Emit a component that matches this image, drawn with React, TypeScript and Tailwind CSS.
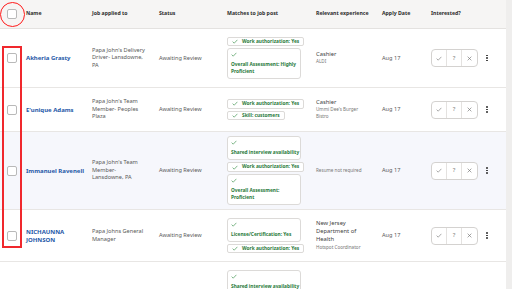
import React from "react";

type TagT = { lines: string[]; stacked?: boolean };
type Row = {
  name: string[];
  job: string[];
  tags: TagT[];
  exp: string[];
  expSub?: string;
  h: string;
  shaded?: boolean;
  actions?: boolean;
};

const rows: Row[] = [
  {
    name: ["Akheria Grasty"],
    job: ["Papa John's Delivery", "Driver- Lansdowne,", "PA"],
    tags: [
      { lines: ["Work authorization: Yes"] },
      { lines: ["Overall Assessment: Highly", "Proficient"], stacked: true },
    ],
    exp: ["Cashier"],
    expSub: "ALDI",
    h: "h-[59px]",
    actions: true,
  },
  {
    name: ["E'unique Adams"],
    job: ["Papa John's Team", "Member- Peoples", "Plaza"],
    tags: [{ lines: ["Work authorization: Yes"] }, { lines: ["Skill: customers"] }],
    exp: ["Cashier"],
    expSub: "Ummi Dee's Burger\nBistro",
    h: "h-[44px]",
    actions: true,
  },
  {
    name: ["Immanuel Ravenell"],
    job: ["Papa John's Team", "Member-", "Lansdowne, PA"],
    tags: [
      { lines: ["Shared interview availability"], stacked: true },
      { lines: ["Work authorization: Yes"] },
      { lines: ["Overall Assessment:", "Proficient"], stacked: true },
    ],
    exp: [],
    expSub: "Resume not required",
    h: "h-[78px]",
    shaded: true,
    actions: true,
  },
  {
    name: ["NICHAUNNA", "JOHNSON"],
    job: ["Papa Johns General", "Manager"],
    tags: [
      { lines: ["License/Certification: Yes"], stacked: true },
      { lines: ["Work authorization: Yes"] },
    ],
    exp: ["New Jersey", "Department of", "Health"],
    expSub: "Hotspot Coordinator",
    h: "h-[52px]",
    actions: true,
  },
];

function Check() {
  return (
    <svg width="6" height="5" viewBox="0 0 10 8" className="shrink-0">
      <path d="M1 4.2 L3.7 6.8 L9 1.2" fill="none" stroke="#4c9a5c" strokeWidth="1.2" />
    </svg>
  );
}

function Box() {
  return <div className="w-[10px] h-[10px] rounded-[2px] border border-[#b9b9b9] bg-white" />;
}

function Tag({ t }: { t: TagT }) {
  if (t.stacked) {
    return (
      <div className="w-[74px] rounded-[3px] border border-[#dcdad8] bg-white px-[3px] pt-[3px] pb-[3px]">
        <Check />
        <div className="mt-[4px] text-[4.8px] font-bold leading-[7px] text-[#2a7a3b]">
          {t.lines.map((l) => (
            <div key={l} className="whitespace-nowrap">{l}</div>
          ))}
        </div>
      </div>
    );
  }
  return (
    <div className="flex h-[9.5px] w-fit items-center gap-[4px] rounded-[2px] border border-[#dcdad8] bg-white px-[4px] text-[4.8px] font-bold text-[#2a7a3b]">
      <Check />
      <span className="whitespace-nowrap">{t.lines[0]}</span>
    </div>
  );
}

function Actions() {
  return (
    <div className="flex items-center">
      <div className="flex h-[18px] overflow-hidden rounded-[4px] border border-[#d4d2d0] bg-white text-[6px] text-[#767676]">
        <div className="flex w-[15px] items-center justify-center border-r border-[#e4e2e0]">
          <svg width="6" height="5" viewBox="0 0 10 8">
            <path d="M1 4.2 L3.7 6.8 L9 1.2" fill="none" stroke="#6f6f6f" strokeWidth="1" />
          </svg>
        </div>
        <div className="flex w-[15px] items-center justify-center border-r border-[#e4e2e0]">?</div>
        <div className="flex w-[15px] items-center justify-center">
          <svg width="5" height="5" viewBox="0 0 8 8">
            <path d="M1 1 L7 7 M7 1 L1 7" stroke="#6f6f6f" strokeWidth="1" />
          </svg>
        </div>
      </div>
      <div className="ml-[8px] flex flex-col gap-[1px]">
        <div className="h-[1.6px] w-[1.6px] rounded-full bg-[#2d2d2d]" />
        <div className="h-[1.6px] w-[1.6px] rounded-full bg-[#2d2d2d]" />
        <div className="h-[1.6px] w-[1.6px] rounded-full bg-[#2d2d2d]" />
      </div>
    </div>
  );
}

function TableRow({ r }: { r: Row }) {
  return (
    <div className={`flex ${r.h} items-center border-b border-[#e8e6e4] ${r.shaded ? "bg-[#f6f7fc]" : "bg-white"}`}>
      <div className="w-[26px] pl-[7px]">
        <Box />
      </div>
      <div className="w-[66px] text-[6px] font-bold leading-[8px] text-[#2557a7]">
        {r.name.map((n) => (
          <div key={n}>{n}</div>
        ))}
      </div>
      <div className="w-[67px] text-[5.6px] leading-[7.6px] text-[#595959]">
        {r.job.map((j) => (
          <div key={j} className="whitespace-nowrap">{j}</div>
        ))}
      </div>
      <div className="w-[68px] text-[5.6px] text-[#595959]">Awaiting Review</div>
      <div className="flex w-[89px] flex-col gap-[2px]">
        {r.tags.map((t, i) => (
          <Tag key={i} t={t} />
        ))}
      </div>
      <div className="w-[66px] text-[#595959]">
        {r.exp.map((e) => (
          <div key={e} className="text-[5.8px] leading-[7.8px] text-[#424242]">{e}</div>
        ))}
        {r.expSub && (
          <div className="whitespace-pre text-[4.6px] leading-[7px] text-[#767676]">{r.expSub}</div>
        )}
      </div>
      <div className="w-[49px] text-[5.6px] text-[#595959]">Aug 17</div>
      <div className="flex-1">{r.actions && <Actions />}</div>
    </div>
  );
}

export default function App() {
  return (
    <div className="relative flex h-[289px] w-[512px] overflow-hidden bg-[#efeeed] font-['Noto_Sans',sans-serif]">
      <div className="w-[506px] bg-white">
        {/* header */}
        <div className="flex h-[29px] items-center border-b border-[#e4e2e0] bg-[#f6f5f4] text-[5.2px] font-bold text-[#2d2d2d]">
          <div className="w-[26px] pl-[7px]">
            <Box />
          </div>
          <div className="w-[66px]">Name</div>
          <div className="w-[67px]">Job applied to</div>
          <div className="w-[68px]">Status</div>
          <div className="w-[89px]">Matches to job post</div>
          <div className="w-[66px]">Relevant experience</div>
          <div className="w-[49px]">Apply Date</div>
          <div className="flex-1">Interested?</div>
        </div>

        {rows.map((r, i) => (
          <TableRow key={i} r={r} />
        ))}

        {/* partial last row */}
        <div className="flex h-[40px] items-start bg-white pt-[8px]">
          <div className="w-[227px]" />
          <Tag t={{ lines: ["Shared interview availability"], stacked: true }} />
        </div>
      </div>

      {/* red annotations */}
      <div className="absolute left-[0px] top-[2px] h-[25px] w-[25px] rounded-full border border-[#ff1a1a]" />
      <div className="absolute left-[2px] top-[46px] h-[202px] w-[20px] border-2 border-[#f0282d]" />
    </div>
  );
}
